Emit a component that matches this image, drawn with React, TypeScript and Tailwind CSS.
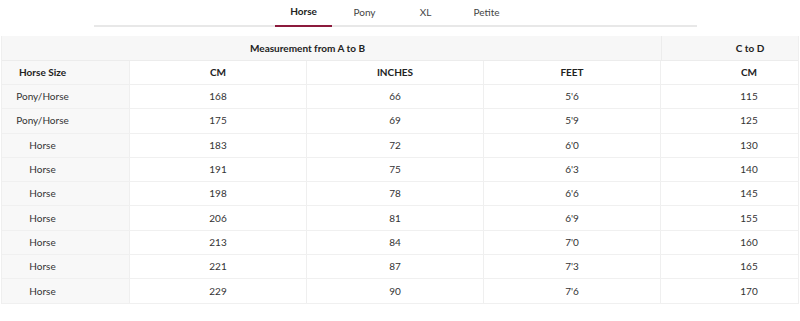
import React from 'react';

const tabs = ['Horse', 'Pony', 'XL', 'Petite'];

const rows = [
    ['Pony/Horse', '168', '66', "5'6", '115'],
    ['Pony/Horse', '175', '69', "5'9", '125'],
    ['Horse', '183', '72', "6'0", '130'],
    ['Horse', '191', '75', "6'3", '140'],
    ['Horse', '198', '78', "6'6", '145'],
    ['Horse', '206', '81', "6'9", '155'],
    ['Horse', '213', '84', "7'0", '160'],
    ['Horse', '221', '87', "7'3", '165'],
    ['Horse', '229', '90', "7'6", '170'],
];

const cols = 'grid grid-cols-[128px_177px_177px_177px_138px]';

const App: React.FC = () => {
    return (
        <div className="w-[800px] h-[321px] bg-white text-[#333] overflow-hidden" style={{ fontFamily: 'Lato, "Open Sans", sans-serif' }}>
            {/* Tabs */}
            <div className="ml-[94px] w-[603px] h-[27px] border-b-2 border-[#e8e8e8] flex gap-[4px] pl-[181px] text-[10px]">
                {tabs.map((tab, i) => (
                    <div
                        key={tab}
                        className={`w-[57px] flex items-center justify-center -mb-[2px] pb-[2px] ${
                            i === 0 ? 'font-bold text-[#222] border-b-2 border-[#8c1a3c]' : 'text-[#444]'
                        }`}
                    >
                        {tab}
                    </div>
                ))}
            </div>

            {/* Size table */}
            <div className="mt-[9px] ml-[1px] w-[798px] border-l border-r border-[#efefef] text-[10px]">
                <div className="grid grid-cols-[660px_138px] h-[25px] bg-[#f7f7f7] border-b border-[#ececec] font-bold text-[#222]">
                    <div className="flex items-center justify-center pr-[48px] border-r border-[#ececec]">Measurement from A to B</div>
                    <div className="flex items-center justify-center pl-[38px]">C to D</div>
                </div>
                <div className={`${cols} h-[24px] border-b border-[#efefef] font-bold text-[#222]`}>
                    <div className="flex items-center justify-center pr-[46px] bg-[#f8f8f8] border-r border-[#efefef]">Horse Size</div>
                    <div className="flex items-center justify-center border-r border-[#efefef]">CM</div>
                    <div className="flex items-center justify-center border-r border-[#efefef]">INCHES</div>
                    <div className="flex items-center justify-center border-r border-[#efefef]">FEET</div>
                    <div className="flex items-center justify-center pl-[38px]">CM</div>
                </div>
                {rows.map((row, r) => (
                    <div key={r} className={`${cols} h-[24.3px] border-b border-[#f0f0f0]`}>
                        {row.map((cell, c) => (
                            <div
                                key={c}
                                className={`flex items-center justify-center ${
                                    c === 0 ? 'pr-[46px] bg-[#f8f8f8] border-r border-[#efefef]' : c === 4 ? 'pl-[38px]' : 'border-r border-[#efefef]'
                                }`}
                            >
                                {cell}
                            </div>
                        ))}
                    </div>
                ))}
            </div>
        </div>
    );
};

export default App;
